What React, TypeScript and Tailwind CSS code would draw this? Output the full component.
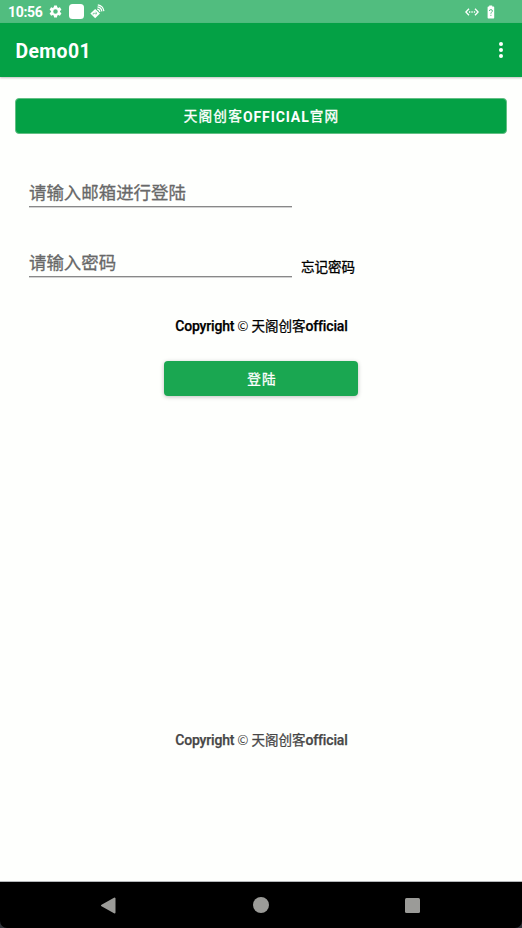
import React from "react";

function StatusBar() {
  return (
    <div className="flex h-[23px] items-center bg-[#51bd7f] pl-2 text-white">
      <span className="w-[41px] pt-[2px] text-[14px] leading-[23px] font-bold tracking-[-0.3px] whitespace-nowrap">10:56</span>
      <svg viewBox="0 0 24 24" className="-ml-[1.5px] h-[15px] w-[15px]" fill="currentColor">
        <path d="M19.14 12.94c.04-.3.06-.61.06-.94 0-.32-.02-.64-.07-.94l2.03-1.58a.49.49 0 0 0 .12-.61l-1.92-3.32a.49.49 0 0 0-.59-.22l-2.39.96a7 7 0 0 0-1.62-.94l-.36-2.54a.48.48 0 0 0-.48-.41h-3.84a.48.48 0 0 0-.47.41l-.36 2.54c-.59.24-1.13.57-1.62.94l-2.39-.96a.48.48 0 0 0-.59.22L2.74 8.87a.48.48 0 0 0 .12.61l2.03 1.58a7.6 7.6 0 0 0 0 1.88l-2.03 1.58a.49.49 0 0 0-.12.61l1.92 3.32c.12.22.37.29.59.22l2.39-.96c.5.38 1.03.7 1.62.94l.36 2.54c.05.24.24.41.48.41h3.84c.24 0 .44-.17.47-.41l.36-2.54c.59-.24 1.13-.56 1.62-.94l2.39.96c.22.08.47 0 .59-.22l1.92-3.32a.48.48 0 0 0-.12-.61zM12 15.6a3.6 3.6 0 1 1 0-7.2 3.6 3.6 0 0 1 0 7.2z" />
      </svg>
      <div className="ml-[6.5px] h-[15px] w-[15px] rounded-[3.5px] bg-white" />
      <svg viewBox="0 0 15 15" className="ml-[6px] h-[15px] w-[15px]" fill="none" stroke="currentColor">
        <path d="M5.2 4.9 10 9.6 5.2 14.3 .4 9.6z" fill="currentColor" stroke="none" />
        <path d="M3.2 10.6V9.3h3.2M5.6 8l1.4 1.3-1.4 1.3" stroke="#51bd7f" strokeWidth=".7" />
        <path d="M7.2 5.2a3.1 3.1 0 0 1 2.7 2.7M7.5 2.9a5.3 5.3 0 0 1 4.4 4.5M7.8.8a7.4 7.4 0 0 1 6.1 6.3" strokeWidth="1.2" />
      </svg>
      <div className="mr-[26px] ml-auto flex items-center gap-[8px]">
        <svg viewBox="0 0 14 8" className="h-[8px] w-[14px]" fill="none" stroke="currentColor" strokeWidth="1.3">
          <path d="M4 .7.9 4 4 7.3M10 .7 13.1 4 10 7.3" />
          <path d="M4 4h1.3M6.4 4h1.3M8.8 4h1.3" />
        </svg>
        <svg viewBox="0 0 8 14" className="mr-[1px] h-[14px] w-[8px]">
          <path d="M2.2 1.5V.5h3v1h1.3q.7 0 .7.7v10.6q0 .7-.7.7H1.3q-.7 0-.7-.7V2.2q0-.7.7-.7z" fill="currentColor" />
          <path d="M2.4 6q0-1.4 1.5-1.4T5.4 6c0 1-1.5 1.2-1.5 2.7M3.9 9.8v1.1" fill="none" stroke="#51bd7f" />
        </svg>
      </div>
    </div>
  );
}

function AppBar() {
  return (
    <header className="flex h-[54px] items-center justify-between bg-[#04a145] pr-[19px] pl-[15.5px] text-white shadow-[0_1px_2px_rgba(0,0,0,0.25)]">
      <h1 className="pt-[4px] text-[19.4px] font-bold tracking-[0.4px]">Demo01</h1>
      <div className="flex flex-col gap-[2px]">
        <i className="h-[4px] w-[4px] rounded-full bg-white" />
        <i className="h-[4px] w-[4px] rounded-full bg-white" />
        <i className="h-[4px] w-[4px] rounded-full bg-white" />
      </div>
    </header>
  );
}

function Field({ label }: { label: string }) {
  return (
    <div className="flex h-[34px] w-[263px] items-start border-b border-[#888888] text-[17.45px] leading-[40px] text-[#686868] shadow-[0_1px_0_#d2d2d2] [-webkit-text-stroke:0.3px_#686868]">
      {label}
    </div>
  );
}

function Copyright() {
  return (
    <>
      <span className="text-[14px] font-medium tracking-[-0.2px]">Copyright</span>
      <span className="font-['Noto_Sans_CJK_SC'] [-webkit-text-stroke:0]"> © </span>天阁创客
      <span className="text-[14px] font-medium tracking-[-0.15px]">official</span>
    </>
  );
}

export default function App() {
  return (
    <div className="flex h-[928px] w-[522px] flex-col overflow-hidden bg-[#fefffd] font-[Roboto,'Noto_Sans_CJK_SC',sans-serif]">
      <StatusBar />
      <AppBar />
      <main className="flex h-[805px] shrink-0 flex-col border-b border-[#b4b6b9]">
        <button className="mx-[15px] mt-[21px] flex h-[35.5px] shrink-0 items-center justify-center rounded-[4px] border border-[#62bf84] bg-[#04a145] pt-[1px] pl-[1px] text-[13.6px] tracking-[1.2px] text-white [-webkit-text-stroke:0.35px_white]">
          天阁创客<span className="pt-[2px] text-[14px] font-bold tracking-[0.9px] [-webkit-text-stroke:0]">OFFICIAL</span>官网
        </button>
        <div className="mt-[39.5px] ml-[29px]">
          <Field label="请输入邮箱进行登陆" />
        </div>
        <div className="mt-[36px] ml-[29px] flex">
          <Field label="请输入密码" />
          <span className="mt-[14px] ml-[9px] text-[13.5px] leading-[20px] text-black [-webkit-text-stroke:0.3px_black]">忘记密码</span>
        </div>
        <p className="mt-[38px] h-[20px] pl-[1px] text-center text-[13.5px] leading-[20px] text-black [-webkit-text-stroke:0.25px_black]">
          <Copyright />
        </p>
        <button className="mt-[26px] flex h-[35px] w-[194px] shrink-0 items-center justify-center self-center rounded-[4px] bg-[#1aa751] pt-[2px] pl-[2px] text-[13.6px] tracking-[1.2px] text-white shadow-[0_1px_4px_rgba(0,0,0,0.25)] [-webkit-text-stroke:0.3px_white]">
          登陆
        </button>
        <p className="mt-[333px] h-[20px] pl-[1px] text-center text-[13.5px] leading-[20px] text-[#464646] [-webkit-text-stroke:0.25px_#464646]">
          <Copyright />
        </p>
      </main>
      <div className="h-[46px] shrink-0 bg-[#30343a]">
        <nav className="flex h-[46px] items-center rounded-b-[7px] bg-black pl-[100px]">
          <svg viewBox="0 0 16 17" className="h-[17px] w-[16px]">
            <path d="M14.5 1.5v14L2 8.5z" fill="#9b9b98" stroke="#9b9b98" strokeWidth="2" strokeLinejoin="round" />
          </svg>
          <div className="ml-[137px] h-[16px] w-[16px] rounded-full bg-[#9b9b98]" />
          <div className="ml-[136px] h-[15px] w-[15px] rounded-[1.5px] bg-[#9b9b98]" />
        </nav>
      </div>
    </div>
  );
}
